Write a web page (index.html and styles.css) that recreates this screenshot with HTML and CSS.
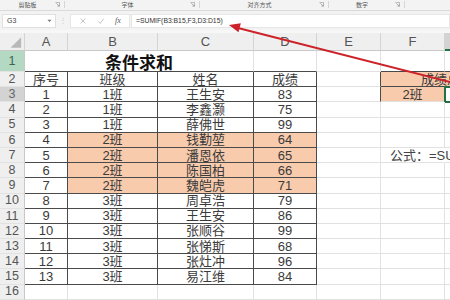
FILE: index.html
```html
<!DOCTYPE html>
<html lang="zh">
<head>
<meta charset="utf-8">
<title>条件求和</title>
<link rel="stylesheet" href="styles.css">
</head>
<body>
<div class="app">
  <div class="ribbon">
    <div class="grp g1"><span class="lbl">剪贴板</span><svg class="launch" viewBox="0 0 6 6"><path d="M0.5 0.5H5.5V5.5" fill="none" stroke="#999" stroke-width="0.8"/><path d="M1.5 1.5L5 5M5 2.8V5H2.8" fill="none" stroke="#999" stroke-width="0.8"/></svg></div>
    <div class="grp g2"><span class="lbl">字体</span><svg class="launch" viewBox="0 0 6 6"><path d="M0.5 0.5H5.5V5.5" fill="none" stroke="#999" stroke-width="0.8"/><path d="M1.5 1.5L5 5M5 2.8V5H2.8" fill="none" stroke="#999" stroke-width="0.8"/></svg></div>
    <div class="grp g3"><span class="lbl">对齐方式</span><svg class="launch" viewBox="0 0 6 6"><path d="M0.5 0.5H5.5V5.5" fill="none" stroke="#999" stroke-width="0.8"/><path d="M1.5 1.5L5 5M5 2.8V5H2.8" fill="none" stroke="#999" stroke-width="0.8"/></svg></div>
    <div class="grp g4"><span class="lbl">数字</span><svg class="launch" viewBox="0 0 6 6"><path d="M0.5 0.5H5.5V5.5" fill="none" stroke="#999" stroke-width="0.8"/><path d="M1.5 1.5L5 5M5 2.8V5H2.8" fill="none" stroke="#999" stroke-width="0.8"/></svg></div>
    <div class="grp g5"></div>
  </div>
  <div class="fbar">
    <div class="namebox"><span>G3</span><svg class="dd" viewBox="0 0 6 4"><path d="M0.5 0.5L3 3.2L5.5 0.5Z" fill="#777"/></svg></div>
    <div class="dots">⋮</div>
    <div class="fbtns">
      <svg class="ico" viewBox="0 0 10 10"><path d="M2 2L8 8M8 2L2 8" stroke="#b4b4b4" stroke-width="1"/></svg>
      <svg class="ico" viewBox="0 0 10 10"><path d="M1.5 5.5L4 8L8.5 2" fill="none" stroke="#b4b4b4" stroke-width="1"/></svg>
      <span class="fx">fx</span>
    </div>
    <div class="finput">=SUMIF(B3:B15,F3,D3:D15)</div>
  </div>
  <div class="gapband"></div>
  <div class="sheet">
    <div class="corner"><svg viewBox="0 0 25 18"><path d="M11 15H22V4Z" fill="#b8b8b8"/></svg></div>
    <div class="h">A</div><div class="h">B</div><div class="h">C</div><div class="h">D</div><div class="h">E</div><div class="h">F</div><div class="h hsel"></div>

    <div class="r rsel1">1</div>
    <div class="c title tb">条件求和</div><div class="c tb"></div><div class="c"></div><div class="c tb"></div><div class="c tb"></div>

    <div class="r">2</div>
    <div class="c t">序号</div><div class="c t">班级</div><div class="c t">姓名</div><div class="c t">成绩</div><div class="c tr"></div><div class="c t o merge"><span class="mtext">成绩总和</span></div>

    <div class="r rsel">3</div>
    <div class="c t">1</div><div class="c t">1班</div><div class="c t">王生安</div><div class="c t">83</div><div class="c tr"></div><div class="c o">2班</div><div class="c gsel"></div>

    <div class="r">4</div>
    <div class="c t">2</div><div class="c t">1班</div><div class="c t">李鑫灏</div><div class="c t">75</div><div class="c"></div><div class="c"></div><div class="c"></div>

    <div class="r">5</div>
    <div class="c t">3</div><div class="c t">1班</div><div class="c t">薛佛世</div><div class="c t">99</div><div class="c"></div><div class="c"></div><div class="c"></div>

    <div class="r">6</div>
    <div class="c t">4</div><div class="c t o">2班</div><div class="c t o">钱勤堃</div><div class="c t o">64</div><div class="c"></div><div class="c"></div><div class="c"></div>

    <div class="r">7</div>
    <div class="c t">5</div><div class="c t o">2班</div><div class="c t o">潘恩依</div><div class="c t o">65</div><div class="c"></div><div class="c note">公式：=SUMIF(B3:B15,F3,D3:D15)</div><div class="c"></div>

    <div class="r">8</div>
    <div class="c t">6</div><div class="c t o">2班</div><div class="c t o">陈国柏</div><div class="c t o">66</div><div class="c"></div><div class="c"></div><div class="c"></div>

    <div class="r">9</div>
    <div class="c t">7</div><div class="c t o">2班</div><div class="c t o">魏皑虎</div><div class="c t o">71</div><div class="c"></div><div class="c"></div><div class="c"></div>

    <div class="r">10</div>
    <div class="c t">8</div><div class="c t">3班</div><div class="c t">周卓浩</div><div class="c t">79</div><div class="c"></div><div class="c"></div><div class="c"></div>

    <div class="r">11</div>
    <div class="c t">9</div><div class="c t">3班</div><div class="c t">王生安</div><div class="c t">86</div><div class="c"></div><div class="c"></div><div class="c"></div>

    <div class="r">12</div>
    <div class="c t">10</div><div class="c t">3班</div><div class="c t">张顺谷</div><div class="c t">99</div><div class="c"></div><div class="c"></div><div class="c"></div>

    <div class="r">13</div>
    <div class="c t">11</div><div class="c t">3班</div><div class="c t">张悌斯</div><div class="c t">68</div><div class="c"></div><div class="c"></div><div class="c"></div>

    <div class="r">14</div>
    <div class="c t">12</div><div class="c t">3班</div><div class="c t">张灶冲</div><div class="c t">96</div><div class="c"></div><div class="c"></div><div class="c"></div>

    <div class="r">15</div>
    <div class="c t">13</div><div class="c t">3班</div><div class="c t">易江维</div><div class="c t">84</div><div class="c"></div><div class="c"></div><div class="c"></div>

    <div class="r">16</div>
    <div class="c"></div><div class="c"></div><div class="c"></div><div class="c"></div><div class="c"></div><div class="c"></div><div class="c"></div>
  </div>
  <svg class="arrow" viewBox="0 0 450 300">
    <line x1="470" y1="87" x2="238" y2="28" stroke="#cc2229" stroke-width="2"/>
    <polygon points="229,25 240.8,23.2 238.5,32.2" fill="#cc2229"/>
  </svg>
</div>
</body>
</html>
```
FILE: styles.css
```css
html, body {
  margin: 0;
  padding: 0;
  background: #ffffff;
}
body {
  width: 450px;
  height: 300px;
  overflow: hidden;
  font-family: "Liberation Sans", "Noto Sans CJK SC", sans-serif;
}
.app {
  position: relative;
  width: 450px;
  height: 300px;
  overflow: hidden;
}
.ribbon {
  display: flex;
  height: 10px;
  background: #f3f3f3;
  border-bottom: 1px solid #dadada;
}
.grp {
  display: flex;
  align-items: center;
  border-right: 1px solid #d6d6d6;
  box-sizing: border-box;
  padding-right: 4px;
  margin: 1px 0 2px;
}
.g1 { width: 65px; }
.g2 { width: 135px; }
.g3 { width: 129px; }
.g4 { width: 76px; }
.g5 { flex: 1; border-right: none; }
.lbl {
  flex: 1;
  text-align: center;
  font-family: "Noto Sans CJK SC", sans-serif;
  font-size: 6px;
  line-height: 7px;
  color: #555555;
}
.launch {
  width: 5px;
  height: 5px;
}
.fbar {
  display: flex;
  align-items: center;
  height: 19px;
  background: #f3f3f3;
  padding: 0 0 0 2px;
  box-sizing: border-box;
}
.namebox {
  display: flex;
  align-items: center;
  justify-content: space-between;
  width: 54px;
  height: 14px;
  background: #ffffff;
  border: 1px solid #e0e0e0;
  box-sizing: border-box;
  padding: 0 3px 0 4px;
  font-size: 7px;
  color: #444444;
}
.dd {
  width: 5px;
  height: 4px;
}
.dots {
  width: 14px;
  text-align: center;
  font-size: 8px;
  color: #c8c8c8;
  line-height: 10px;
}
.fbtns {
  display: flex;
  align-items: center;
  gap: 10px;
  width: 60px;
  height: 14px;
  padding-left: 8px;
  box-sizing: border-box;
  background: #ffffff;
  border: 1px solid #e6e6e6;
}
.ico {
  width: 8px;
  height: 8px;
}
.fx {
  font-family: "Liberation Serif", serif;
  font-style: italic;
  font-size: 8px;
  color: #555555;
}
.finput {
  flex: 1;
  height: 14px;
  margin-left: 1px;
  background: #ffffff;
  border: 1px solid #e6e6e6;
  box-sizing: border-box;
  padding-left: 4px;
  font-size: 6.8px;
  line-height: 12px;
  color: #333333;
  white-space: nowrap;
}
.gapband {
  height: 3px;
  background: #f7f7f7;
}
.sheet {
  display: grid;
  grid-template-columns: 25px 43px 90px 96px 63px 64px 64px 64px;
  grid-template-rows: 18px 21px repeat(15, 15.2px);
  width: 513px;
}
.corner, .h, .r {
  background: #efefef;
  box-sizing: border-box;
  border-right: 1px solid #d4d4d4;
  border-bottom: 1px solid #c8c8c8;
  color: #555555;
  font-size: 13px;
  display: flex;
  align-items: center;
  justify-content: center;
  line-height: 1;
}
.corner svg {
  width: 25px;
  height: 18px;
  display: block;
}
.hsel {
  background: #d3d3d3;
  border-bottom: 2px solid #217346;
}
.r {
  border-bottom: 1px solid #e2e2e2;
  border-right: 1px solid #c8c8c8;
  font-size: 12.5px;
}
.rsel1 {
  background: #b3d9c3;
  color: #3a6650;
}
.rsel {
  background: #d3d3d3;
  color: #666666;
}
.c {
  box-sizing: border-box;
  border-right: 1px solid #e1e1e1;
  border-bottom: 1px solid #e1e1e1;
  display: flex;
  align-items: center;
  justify-content: center;
  font-size: 13px;
  line-height: 1;
  color: #3a3a3a;
  white-space: nowrap;
  overflow: hidden;
}
.c.t {
  border-right-color: #4a4a4a;
  border-bottom-color: #4a4a4a;
}
.c.tb { border-bottom-color: #4a4a4a; }
.c.tr { border-right-color: #4a4a4a; }
.c.o { background: #f8cbad; }
.title {
  grid-column: span 3;
  font-family: "Noto Sans CJK SC", sans-serif;
  font-weight: bold;
  font-size: 17px;
  color: #111111;
  overflow: visible;
}
.merge {
  grid-column: span 2;
  justify-content: flex-start;
  padding-left: 40px;
}
.gsel {
  outline: 2px solid #217346;
  outline-offset: -1px;
}
.note {
  justify-content: flex-start;
  padding-left: 9px;
  overflow: visible;
  border-right-color: transparent;
  position: relative;
  z-index: 1;
  color: #444444;
}
.arrow {
  position: absolute;
  left: 0;
  top: 0;
  width: 450px;
  height: 300px;
  pointer-events: none;
  z-index: 5;
}
```
